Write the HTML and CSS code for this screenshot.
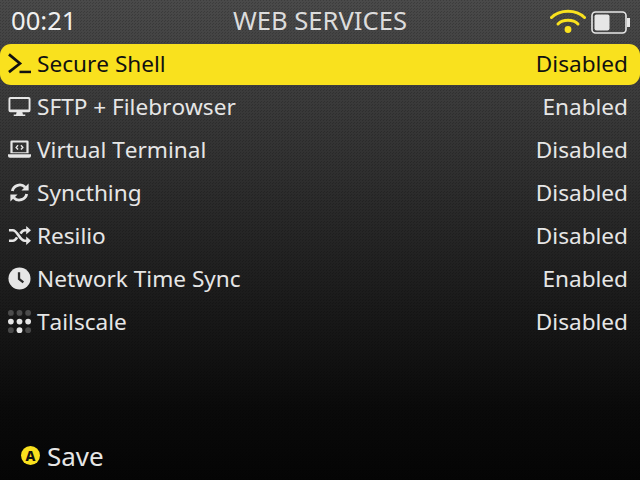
FILE: index.html
```html
<!DOCTYPE html>
<html lang="en">
<head>
<meta charset="utf-8">
<title>Web Services</title>
<link rel="stylesheet" href="styles.css">
</head>
<body>
<div class="screen">
  <header class="status">
    <span class="clock">00:21</span>
    <span class="title">WEB SERVICES</span>
    <span class="indicators">
      <svg class="wifi" width="36" height="25" viewBox="0 0 36 25"><g fill="none" stroke="#f9e11e" stroke-width="3" stroke-linecap="round"><path d="M1.500 8.500C10 0 26 0 34.500 8.500"/><path d="M8 15C13 10 23 10 28 15"/></g><circle cx="18" cy="20.500" r="3.400" fill="#f9e11e"/></svg>
      <svg class="battery" width="39" height="23" viewBox="0 0 39 23"><rect x="1" y="1" width="34" height="21" rx="3.500" fill="none" stroke="#e6e6e6" stroke-width="1.600"/><rect x="3.500" y="3.500" width="15" height="16" rx="2" fill="#e6e6e6"/><rect x="36" y="7" width="3" height="9" fill="#e6e6e6"/></svg>
    </span>
  </header>
  <ul class="list">
    <li class="row selected">
      <svg class="icon" viewBox="0 0 24 24"><path d="M1 2.500L12.500 12L1 21" fill="none" stroke="currentColor" stroke-width="2.800"/><rect x="12" y="19.500" width="12" height="2.600" fill="currentColor"/></svg>
      <span class="name">Secure Shell</span><span class="value">Disabled</span>
    </li>
    <li class="row">
      <svg class="icon" viewBox="0 0 24 24"><path fill="currentColor" fill-rule="evenodd" d="M2.500 2h19A2 2 0 0 1 23.500 4v12a2 2 0 0 1-2 2h-6.500l.6 2.400H18V22H6v-1.600h2.400L9 18H2.500a2 2 0 0 1-2-2V4a2 2 0 0 1 2-2zm0 2.200V15h19V4.200z"/></svg>
      <span class="name">SFTP + Filebrowser</span><span class="value">Enabled</span>
    </li>
    <li class="row">
      <svg class="icon" viewBox="0 0 24 24"><path fill="currentColor" fill-rule="evenodd" d="M4 2.500h16A1.500 1.500 0 0 1 21.500 4V16h-19V4A1.500 1.500 0 0 1 4 2.500zM4.800 4.800V14.800h14.400V4.800z"/><path fill="currentColor" d="M0 17h24v1.500a2 2 0 0 1-2 2H2a2 2 0 0 1-2-2z"/><path d="M10.500 7.500L8.500 9.800L10.500 12M13.500 7.500L15.500 9.800L13.500 12" fill="none" stroke="currentColor" stroke-width="1.500"/></svg>
      <span class="name">Virtual Terminal</span><span class="value">Disabled</span>
    </li>
    <li class="row">
      <svg class="icon" viewBox="0 0 24 24"><path fill="none" stroke="currentColor" stroke-width="3" d="M4.500 10.500A8 8 0 0 1 18 6.500"/><path fill="currentColor" d="M21.500 2.500V10h-7.500z"/><path fill="none" stroke="currentColor" stroke-width="3" d="M19.500 13.500A8 8 0 0 1 6 17.500"/><path fill="currentColor" d="M2.500 21.500V14h7.500z"/></svg>
      <span class="name">Syncthing</span><span class="value">Disabled</span>
    </li>
    <li class="row">
      <svg class="icon" viewBox="0 0 24 24"><path fill="none" stroke="currentColor" stroke-width="2.800" d="M1 6.500h4c5 0 7 11 12.500 11H20M1 17.500h4c2 0 3.300-1.500 4.500-3.500M13 10c1.200-2 2.500-3.500 4.500-3.500H20"/><path fill="currentColor" d="M19 2l5 4.500L19 11zM19 13l5 4.500L19 22z"/></svg>
      <span class="name">Resilio</span><span class="value">Disabled</span>
    </li>
    <li class="row">
      <svg class="icon" viewBox="0 0 24 24"><circle cx="12" cy="12" r="11.500" fill="currentColor"/><path d="M11.500 5.500V12.500L16 16" fill="none" stroke="#2b2b2b" stroke-width="2.400"/></svg>
      <span class="name">Network Time Sync</span><span class="value">Enabled</span>
    </li>
    <li class="row">
      <svg class="icon" viewBox="0 0 24 24"><g fill="currentColor"><g opacity=".25"><circle cx="3" cy="3" r="3"/><circle cx="12" cy="3" r="3"/><circle cx="21" cy="3" r="3"/><circle cx="3" cy="21" r="3"/><circle cx="21" cy="21" r="3"/></g><circle cx="3" cy="12" r="3"/><circle cx="12" cy="12" r="3"/><circle cx="21" cy="12" r="3"/><circle cx="12" cy="21" r="3"/></g></svg>
      <span class="name">Tailscale</span><span class="value">Disabled</span>
    </li>
  </ul>
  <footer class="footer">
    <span class="button-a">A</span>
    <span class="hint">Save</span>
  </footer>
</div>
</body>
</html>
```

FILE: styles.css
```css
* { box-sizing: border-box; }
html, body { margin: 0; padding: 0; }
body { width: 640px; height: 480px; overflow: hidden; background: #000; }
.screen {
  width: 640px;
  height: 480px;
  display: flex;
  flex-direction: column;
  font-family: "Noto Sans", sans-serif;
  font-kerning: none;
  color: #e6e6e6;
  background-image:
    linear-gradient(45deg, rgba(0,0,0,.18) 25%, transparent 25%, transparent 75%, rgba(0,0,0,.18) 75%),
    linear-gradient(180deg, #4a4a4a 0%, #0a0a0a 85%, #050505 100%);
  background-size: 3px 3px, 100% 100%;
}
.status {
  height: 44px;
  padding: 0 10px 2px 11px;
  display: flex;
  align-items: center;
  justify-content: space-between;
  position: relative;
  font-size: 25.6px;
  line-height: 1;
}
.clock { color: #f0f0f0; }
.title {
  position: absolute;
  left: 0;
  right: 0;
  text-align: center;
  color: #dcdcdc;
  pointer-events: none;
}
.indicators { display: flex; align-items: flex-end; gap: 5px; margin-top: 1px; }
.list { list-style: none; margin: 0; padding: 0; flex: 1; }
.row {
  height: 41px;
  margin-bottom: 2px;
  padding: 0 12px 2px 8px;
  display: flex;
  align-items: center;
  font-size: 22.6px;
}
.row.selected { background: #f9e11e; color: #111; border-radius: 11px; }
.icon { width: 23px; height: 23px; margin-right: 6px; flex: none; }
.name { flex: 1; }
.footer { height: 46px; padding: 0 0 3px 21px; display: flex; align-items: center; gap: 7px; font-size: 26px; }
.button-a {
  width: 19px; height: 19px; border-radius: 50%;
  background: #f9e11e; color: #111;
  font-size: 14px; font-weight: 800;
  display: flex; align-items: center; justify-content: center;
}
```
